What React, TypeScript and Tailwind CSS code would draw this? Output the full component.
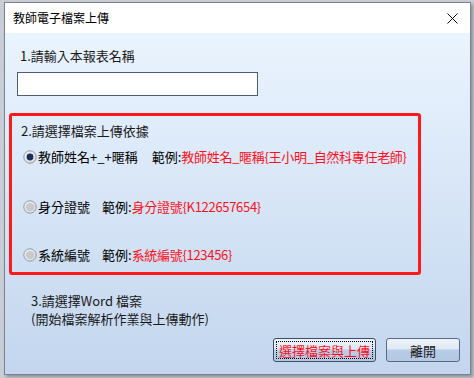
import React from "react";

const font = { fontFamily: '"Microsoft JhengHei", "Noto Sans CJK TC", sans-serif' };

function Radio({ checked }: { checked?: boolean }) {
  return (
    <svg width="14" height="14" viewBox="0 0 14 14" className="shrink-0">
      <defs>
        <linearGradient id={checked ? "rg1" : "rg0"} x1="0" y1="0" x2="1" y2="1">
          <stop offset="0" stopColor="#f4f4f4" />
          <stop offset="1" stopColor="#d8d8d8" />
        </linearGradient>
      </defs>
      <circle cx="7" cy="7" r="6.2" fill={`url(#${checked ? "rg1" : "rg0"})`} stroke="#8e99a8" strokeWidth="1" />
      {checked ? (
        <circle cx="7" cy="7" r="3.4" fill="#1c2f5a" />
      ) : (
        <circle cx="7" cy="7" r="3.6" fill="#c9cbce" stroke="#b5b8bc" strokeWidth="0.6" />
      )}
    </svg>
  );
}

function Option({
  checked,
  label,
  example,
  gap,
}: {
  checked?: boolean;
  label: string;
  example: string;
  gap: string;
}) {
  return (
    <div className="flex items-center h-[16px] ml-[2px]">
      <Radio checked={checked} />
      <span className="ml-[1px] text-[13px] leading-[16px] text-black whitespace-nowrap">{label}</span>
      <span className={`${gap} text-[13px] leading-[16px] text-black whitespace-nowrap`}>範例:</span>
      <span className="text-[13px] leading-[16px] text-[#ff1020] whitespace-nowrap tracking-[-0.3px]">{example}</span>
    </div>
  );
}

export default function App() {
  return (
    <div className="w-[474px] h-[378px] bg-[#c9ced6] overflow-hidden" style={font}>
      <div className="ml-[4px] mt-[2px] w-[467px] h-[373px] border border-[#7b8290] flex flex-col shadow-[2px_2px_3px_rgba(0,0,0,0.3)]">
        {/* title bar */}
        <div className="h-[30px] bg-white flex items-center justify-between pl-[8px] pr-[10px] shrink-0">
          <span className="text-[12px] text-black leading-none">教師電子檔案上傳</span>
          <svg width="11" height="11" viewBox="0 0 11 11" className="mr-[2px]">
            <path d="M0.5 0.5 L10.5 10.5 M10.5 0.5 L0.5 10.5" stroke="#111" strokeWidth="1" />
          </svg>
        </div>

        {/* body */}
        <div className="flex-1 flex flex-col bg-gradient-to-b from-[#eaf4fe] to-[#c3d6ee] pl-[15px] pt-[15px] pb-[12px]">
          <div className="text-[13px] leading-[16px] text-[#1a1a1a]">1.請輸入本報表名稱</div>
          <div className="mt-[8px] ml-[-3px] w-[241px] h-[24px] bg-white border border-[#4f5d70]" />

          <div className="mt-[17px] ml-[-11px] w-[412px] h-[162px] border-[3px] border-[#ff1a1a] rounded-[3px] pt-[7px] pl-[9px] flex flex-col">
            <div className="text-[13px] leading-[16px] text-[#1a1a1a]">2.請選擇檔案上傳依據</div>
            <div className="mt-[10px]">
              <Option checked label="教師姓名+_+暱稱" example="教師姓名_暱稱{王小明_自然科專任老師}" gap="ml-[14px]" />
            </div>
            <div className="mt-[34px]">
              <Option label="身分證號" example="身分證號{K122657654}" gap="ml-[12px]" />
            </div>
            <div className="mt-[32px]">
              <Option label="系統編號" example="系統編號{123456}" gap="ml-[12px]" />
            </div>
          </div>

          <div className="mt-[17px] ml-[11px] text-[13px] leading-[18px] text-[#1a1a1a]">
            <div>3.請選擇Word 檔案</div>
            <div>(開始檔案解析作業與上傳動作)</div>
          </div>

          <div className="mt-auto flex justify-end gap-[10px] pr-[10px]">
            <button className="w-[103px] h-[24px] rounded-[3px] border border-[#3e4d66] bg-[linear-gradient(to_bottom,#eef3fa_0%,#dfe8f4_45%,#b9cce6_50%,#b3c8e4_100%)] p-[2px]">
              <div className="w-full h-full border border-dotted border-black flex items-center justify-center text-[13px] text-[#ff1020] leading-none">
                選擇檔案與上傳
              </div>
            </button>
            <button className="w-[74px] h-[24px] rounded-[3px] border border-[#5a6a84] bg-[linear-gradient(to_bottom,#eef3fa_0%,#dfe8f4_45%,#b9cce6_50%,#b3c8e4_100%)] flex items-center justify-center text-[13px] text-[#1a1a1a] leading-none">
              離開
            </button>
          </div>
        </div>
      </div>
    </div>
  );
}
